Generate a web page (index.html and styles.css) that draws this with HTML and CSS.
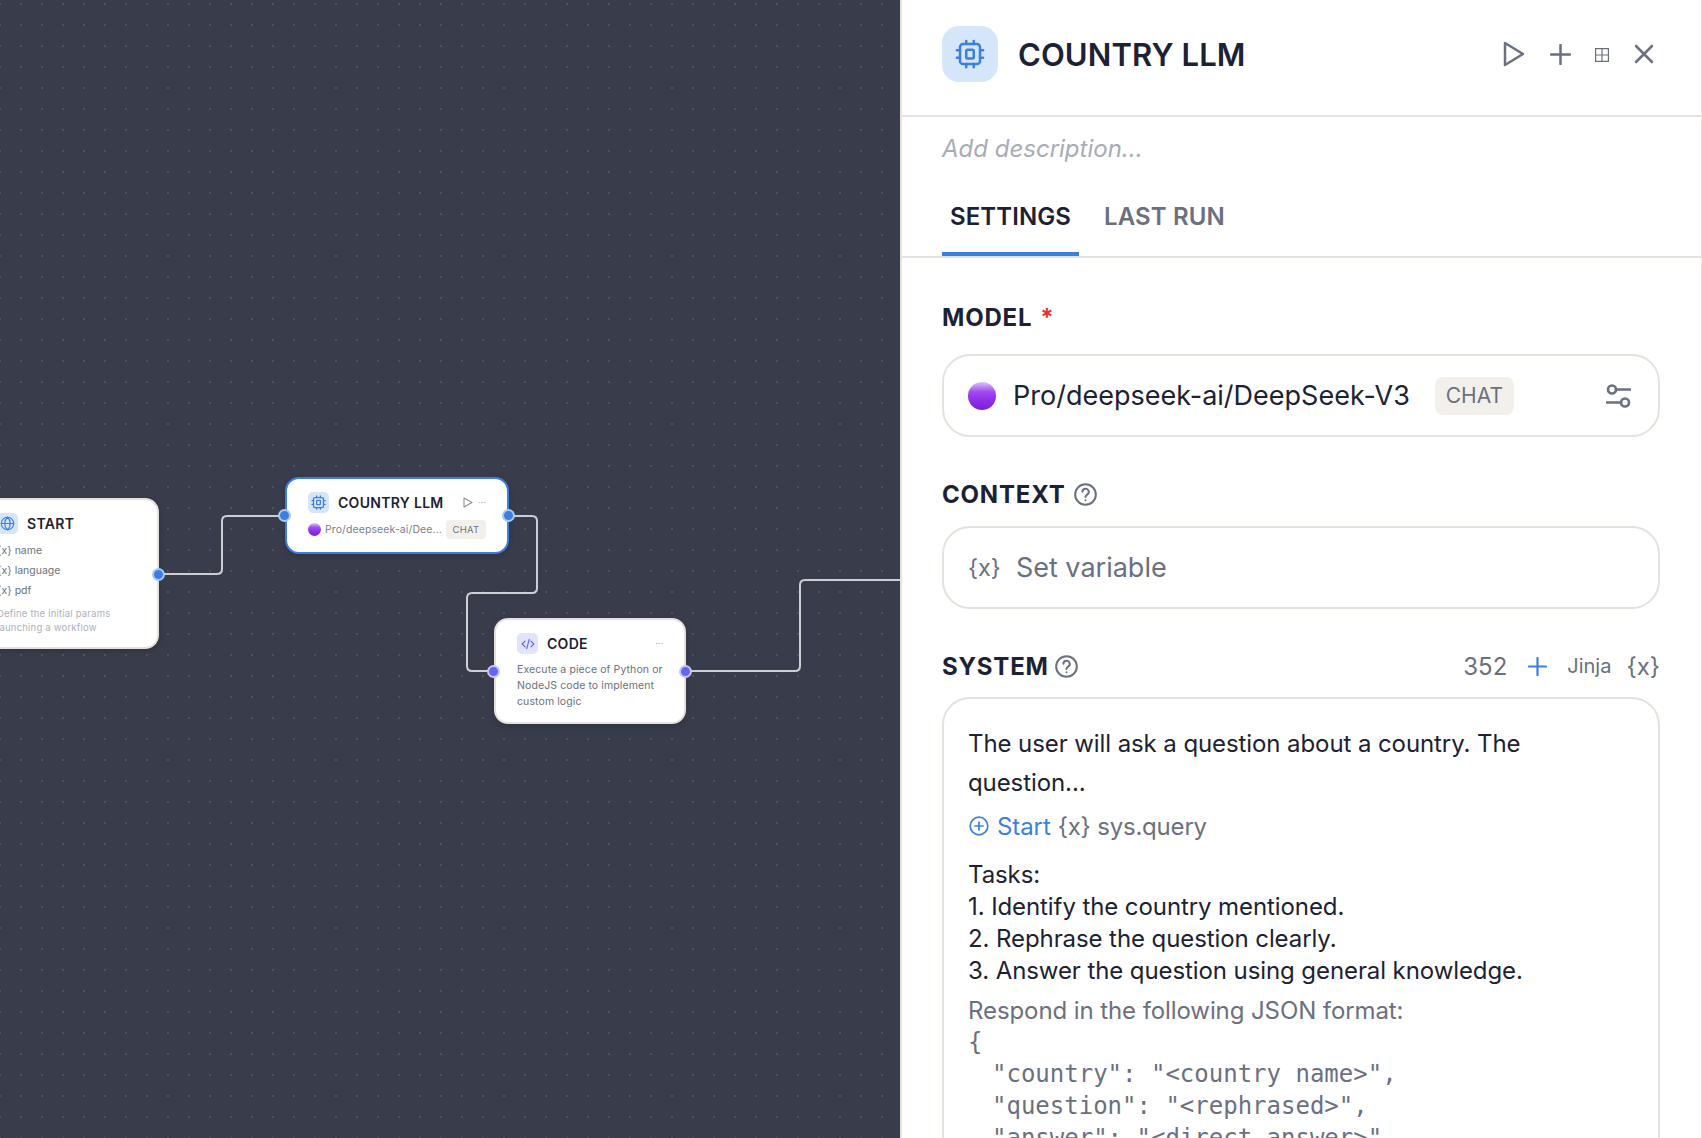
FILE: index.html
```html
<!DOCTYPE html>
<html lang="en">
<head>
<meta charset="utf-8">
<title>COUNTRY LLM</title>
<link rel="stylesheet" href="styles.css">
</head>
<body>
<svg width="0" height="0" class="defs">
  <symbol id="chip" viewBox="0 0 24 24"><g fill="none" stroke="currentColor" stroke-width="2" stroke-linecap="round" stroke-linejoin="round"><rect x="4" y="4" width="16" height="16" rx="2.500"/><rect x="9" y="8.500" width="6" height="7" rx="1"/><path d="M9 1.500V4M15 1.500V4M9 20v2.500M15 20v2.500M1.500 9H4M1.500 15H4M20 9h2.500M20 15h2.500"/></g></symbol>
  <symbol id="help" viewBox="0 0 24 24"><g fill="none" stroke="currentColor" stroke-width="2.100" stroke-linecap="round"><circle cx="12" cy="12" r="10.800"/><path d="M8.800 9.200a3.300 3.300 0 1 1 4.900 2.900c-1 .6-1.700 1.200-1.700 2.400"/><path d="M12 18h.01"/></g></symbol>
</svg>
<div class="app">
  <main class="canvas">
    <svg class="edges" width="900" height="1138" viewBox="0 0 900 1138">
      <path d="M159 574H217Q222 574 222 569V521Q222 516 227 516H285"/>
      <path d="M509 516H532Q537 516 537 521V588Q537 593 532 593H472Q467 593 467 598V666Q467 671 472 671H494"/>
      <path d="M686 671H795Q800 671 800 666V585Q800 580 805 580H900"/>
    </svg>

    <section class="node node-start">
      <header class="node-head">
        <span class="node-icon tone-blue">
          <svg viewBox="0 0 24 24" width="15" height="15" fill="none" stroke="currentColor" stroke-width="1.800"><circle cx="12" cy="12" r="10"/><path d="M2 12h20M12 2c3.200 3 4.500 6.400 4.500 10S15.200 19 12 22c-3.200-3-4.500-6.400-4.500-10S8.800 5 12 2z"/></svg>
        </span>
        <span class="node-title">START</span>
      </header>
      <ul class="vars">
        <li><span class="brace">{x}</span> name</li>
        <li><span class="brace">{x}</span> language</li>
        <li><span class="brace">{x}</span> pdf</li>
      </ul>
      <p class="start-desc">Define the initial params<br>launching a workflow</p>
      <i class="handle handle-right tone-handle-blue"></i>
    </section>

    <section class="node node-llm">
      <header class="node-head">
        <span class="node-icon tone-blue"><svg width="15" height="15"><use href="#chip"/></svg></span>
        <span class="node-title">COUNTRY LLM</span>
        <span class="node-tools">
          <svg width="10" height="11" viewBox="0 0 10 11" fill="none" stroke="currentColor" stroke-width="1.100" stroke-linejoin="round"><path d="M1 1l8 4.500L1 10z"/></svg>
          <span class="dots">···</span>
        </span>
      </header>
      <div class="node-model">
        <i class="sphere sphere-small"></i>
        <span class="node-model-name">Pro/deepseek-ai/Dee...</span>
        <span class="node-chip">CHAT</span>
      </div>
      <i class="handle handle-left tone-handle-blue"></i>
      <i class="handle handle-right tone-handle-blue"></i>
    </section>

    <section class="node node-code">
      <header class="node-head">
        <span class="node-icon tone-indigo">
          <svg viewBox="0 0 24 24" width="14" height="14" fill="none" stroke="currentColor" stroke-width="2" stroke-linecap="round" stroke-linejoin="round"><path d="M7 7l-5 5 5 5M17 7l5 5-5 5M14 4l-4 16"/></svg>
        </span>
        <span class="node-title">CODE</span>
        <span class="node-tools"><span class="dots">···</span></span>
      </header>
      <p class="code-desc">Execute a piece of Python or NodeJS code to implement custom logic</p>
      <i class="handle handle-left tone-handle-indigo"></i>
      <i class="handle handle-right tone-handle-indigo"></i>
    </section>
  </main>

  <aside class="panel">
    <header class="panel-head">
      <span class="panel-icon"><svg width="30" height="30"><use href="#chip"/></svg></span>
      <h1 class="panel-title">COUNTRY LLM</h1>
      <div class="panel-actions">
        <svg width="22" height="26" viewBox="0 0 22 26" fill="none" stroke="currentColor" stroke-width="2.500" stroke-linejoin="round"><path d="M2 2l18 11L2 24z"/></svg>
        <svg width="21" height="21" viewBox="0 0 21 21" fill="none" stroke="currentColor" stroke-width="2.500" stroke-linecap="round"><path d="M10.500 1v19M1 10.500h19"/></svg>
        <svg class="action-grid" width="14" height="14" viewBox="0 0 14 14" fill="none" stroke="currentColor" stroke-width="1.200"><path d="M.6.6h12.800v12.800H.6zM7 .6v12.800M.6 7h12.800"/></svg>
        <svg width="20" height="20" viewBox="0 0 20 20" fill="none" stroke="currentColor" stroke-width="2.500" stroke-linecap="round"><path d="M2 2l16 16M18 2L2 18"/></svg>
      </div>
    </header>
    <p class="panel-desc">Add description...</p>
    <nav class="tabs">
      <span class="tab tab-active">SETTINGS</span>
      <span class="tab">LAST RUN</span>
    </nav>
    <div class="form">
      <div class="field-head field-head-model">
        <span class="label">MODEL</span><span class="required">*</span>
      </div>
      <div class="box box-model">
        <i class="sphere sphere-large"></i>
        <span class="model-name">Pro/deepseek-ai/DeepSeek-V3</span>
        <span class="model-chip">CHAT</span>
        <svg class="sliders" width="25" height="24" viewBox="0 0 25 24" fill="none" stroke="currentColor" stroke-width="2.600" stroke-linecap="round"><circle cx="6" cy="5.500" r="4"/><path d="M10 5.500h14"/><circle cx="19" cy="18.500" r="4"/><path d="M1 18.500h14"/></svg>
      </div>
      <div class="field-head">
        <span class="label">CONTEXT</span>
        <svg class="help" width="23" height="23"><use href="#help"/></svg>
      </div>
      <div class="box box-context">
        <span class="box-brace">{x}</span>
        <span class="set-var">Set variable</span>
      </div>
      <div class="field-head field-head-system">
        <span class="label">SYSTEM</span>
        <svg class="help" width="23" height="23"><use href="#help"/></svg>
        <div class="system-tools">
          <span class="count">352</span>
          <svg class="sys-plus" width="19" height="19" viewBox="0 0 19 19" fill="none" stroke="currentColor" stroke-width="2.200" stroke-linecap="round"><path d="M9.500 1v17M1 9.500h17"/></svg>
          <span class="jinja">Jinja</span>
          <span class="count">{x}</span>
        </div>
      </div>
      <div class="box box-system">
        <p class="sys-intro">The user will ask a question about a country. The question...</p>
        <div class="sys-ref">
          <svg width="20" height="20" viewBox="0 0 20 20" fill="none" stroke="currentColor" stroke-width="1.700" stroke-linecap="round"><circle cx="10" cy="10" r="8.800"/><path d="M10 6v8M6 10h8"/></svg>
          <span class="ref-start">Start</span>
          <span class="ref-var">{x} sys.query</span>
        </div>
        <p class="sys-tasks">Tasks:<br>1. Identify the country mentioned.<br>2. Rephrase the question clearly.<br>3. Answer the question using general knowledge.</p>
        <p class="sys-respond">Respond in the following JSON format:</p>
        <div class="sys-json">
          <div>{</div>
          <div class="json-line">"country": "&lt;country name&gt;",</div>
          <div class="json-line">"question": "&lt;rephrased&gt;",</div>
          <div class="json-line">"answer": "&lt;direct answer&gt;"</div>
          <div>}</div>
        </div>
      </div>
    </div>
  </aside>
</div>
</body>
</html>
```
FILE: styles.css
```css
* { box-sizing: border-box; }
html, body { margin: 0; height: 100%; overflow: hidden; }
body { font-family: Inter, "Noto Sans", sans-serif; color: #1c2233; background: #393c4b; }
.defs { position: absolute; }
.app { display: flex; height: 1138px; overflow: hidden; }

/* Canvas */
.canvas {
  position: relative;
  width: 900px;
  flex: none;
  overflow: hidden;
  background-color: #393c4b;
  background-image: radial-gradient(circle at 1px 1px, #50535f 0, #50535f 1px, transparent 1.200px);
  background-size: 21px 21px;
  background-position: -1px 3px;
}
.edges { position: absolute; left: 0; top: 0; }
.edges path { fill: none; stroke: #cdcfd6; stroke-width: 2; }

.node {
  position: absolute;
  background: #fff;
  border: 2px solid #e6e1db;
  border-radius: 14px;
  box-shadow: 0 2px 6px rgba(0, 0, 0, .18);
}
.node-start { left: -26px; top: 498px; width: 185px; height: 151px; padding: 13px 21px; }
.node-llm { left: 285px; top: 477px; width: 224px; height: 77px; padding: 13px 21px; border-color: #3b7fe0; }
.node-code { left: 494px; top: 618px; width: 192px; height: 106px; padding: 13px 21px; }

.node-head { display: flex; align-items: center; gap: 9px; height: 21px; }
.node-icon { width: 21px; height: 21px; border-radius: 5px; display: flex; align-items: center; justify-content: center; flex: none; }
.tone-blue { background: #d6e6fa; color: #3b7fe0; }
.tone-indigo { background: #e2e3fd; color: #6366f1; }
.node-title { font-size: 14px; font-weight: 600; letter-spacing: .3px; white-space: nowrap; }
.node-tools { margin-left: auto; display: flex; align-items: center; gap: 5px; color: #8b8f9c; }
.dots { font-size: 9px; letter-spacing: 0; color: #9a9daa; }

.vars { list-style: none; margin: 7px 0 0; padding: 0; font-size: 10.500px; color: #6b7080; }
.vars li { height: 20px; line-height: 20px; white-space: nowrap; }
.start-desc { margin: 6px 0 0; font-size: 9.500px; line-height: 14px; color: #aeb0ba; white-space: nowrap; letter-spacing: .2px; }

.node-model { display: flex; align-items: center; margin-top: 7px; font-size: 10.500px; color: #7b7f8d; }
.sphere { display: block; border-radius: 50%; flex: none; background: linear-gradient(180deg, #dcc3fa 0%, #a24bf0 35%, #8f2ee8 65%, #7a1fd6 100%); }
.sphere-small { width: 13px; height: 13px; margin-right: 4px; }
.sphere-large { width: 28px; height: 28px; margin-right: 17px; }
.node-model-name { white-space: nowrap; letter-spacing: .1px; }
.node-chip { margin-left: auto; width: 40px; height: 19px; background: #f3f0eb; border-radius: 4px; font-size: 9.500px; line-height: 19px; text-align: center; letter-spacing: .3px; color: #6b7080; }
.code-desc { margin: 8px 0 0; font-size: 10.500px; line-height: 16px; color: #6b7080; letter-spacing: .1px; }

.handle { position: absolute; width: 13px; height: 13px; border-radius: 50%; border: 2px solid; top: 50%; margin-top: -6.500px; }
.handle-left { left: -9px; }
.handle-right { right: -8px; }
.tone-handle-blue { background: #3b7fe0; border-color: #a9c8f2; }
.tone-handle-indigo { background: #6366f1; border-color: #c3c4f8; }
.node-start .handle { top: 74px; }

/* Panel */
.panel {
  width: 802px;
  flex: none;
  background: #fff;
  border-left: 2px solid #e6e1db;
  border-right: 1px solid #e6e1db;
  display: flex;
  flex-direction: column;
  overflow: hidden;
}
.panel-head { display: flex; align-items: center; height: 117px; padding: 0 40px 7px; border-bottom: 2px solid #e6e1db; flex: none; }
.panel-icon { width: 56px; height: 56px; border-radius: 17px; background: #d6e6fa; color: #3b7fe0; display: flex; align-items: center; justify-content: center; flex: none; }
.panel-title { margin: 0 0 0 20px; font-size: 31px; font-weight: 600; letter-spacing: .1px; }
.panel-actions { margin-left: auto; display: flex; align-items: center; color: #6b7080; gap: 25px; padding-right: 7px; }
.action-grid { margin-left: -1px; margin-top: 2px; }
.panel-desc { margin: 0; padding: 18px 40px 0; height: 60px; font-size: 24px; font-style: italic; color: #a9acb6; line-height: 28px; flex: none; }
.tabs { display: flex; height: 81px; border-bottom: 2px solid #e6e1db; padding: 0 40px; gap: 17px; flex: none; }
.tab { display: block; padding: 25px 8px 0; height: 79px; font-size: 24px; line-height: 30px; font-weight: 600; letter-spacing: .1px; color: #6b7080; }
.tab-active { color: #1c2233; border-bottom: 4px solid #3b7fe0; }

.form { padding: 43px 41px 0 40px; }
.field-head { display: flex; align-items: center; gap: 8px; height: 32px; margin-bottom: 16px; }
.field-head-model { margin-bottom: 21px; }
.field-head-system { margin-bottom: 15px; gap: 6px; }
.label { font-size: 24px; font-weight: 700; letter-spacing: .8px; }
.required { color: #e5322d; font-size: 24px; font-weight: 700; }
.help { color: #6b7080; }

.box { border: 2px solid #e6e1db; border-radius: 28px; padding: 0 24px; display: flex; align-items: center; }
.box-model { height: 83px; margin-bottom: 41px; }
.model-name { font-size: 27px; white-space: nowrap; }
.model-chip { margin-left: 25px; width: 79px; height: 38px; border-radius: 8px; background: #f3f0eb; color: #6b7080; font-size: 21px; line-height: 38px; text-align: center; }
.sliders { margin-left: auto; margin-right: 3px; color: #6b7080; }
.box-context { height: 83px; margin-bottom: 41px; color: #6b7080; }
.box-brace { font-size: 23.500px; margin-right: 15px; }
.set-var { font-size: 27px; }
.system-tools { margin-left: auto; display: flex; align-items: center; color: #6b7080; }
.count { font-size: 24px; }
.sys-plus { color: #3b7fe0; margin: 0 20px 0 21px; }
.jinja { font-size: 20px; margin-right: 15px; }

.box-system { display: block; padding: 25px 24px 0; height: 500px; font-size: 24px; letter-spacing: -.09px; }
.box-system p { margin: 0; }
.sys-intro { line-height: 39px; width: 600px; }
.sys-ref { display: flex; align-items: center; height: 32px; margin-top: 8px; color: #6b7080; }
.sys-ref svg { color: #3b7fe0; margin-right: 8px; margin-left: 1px; }
.ref-start { color: #3b7fe0; margin-right: 7px; }
.ref-var { letter-spacing: -.2px; }
.box-system .sys-tasks { margin-top: 17px; line-height: 32px; }
.box-system .sys-respond { margin-top: 8px; line-height: 32px; color: #6b7080; }
.sys-json { margin-top: -1px; font-family: "DejaVu Sans Mono", "Liberation Mono", monospace; font-size: 24px; line-height: 32px; color: #6b7080; letter-spacing: 0; }
.sys-json div { white-space: pre; }
.json-line { padding-left: 24px; }
```
